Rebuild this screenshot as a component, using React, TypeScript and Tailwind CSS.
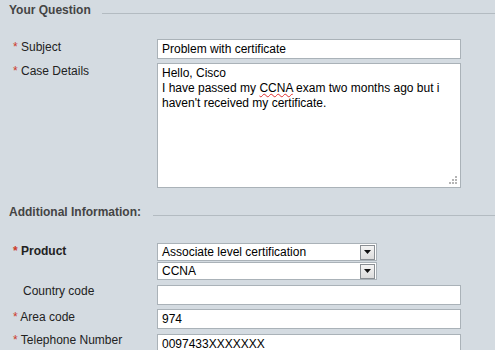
import React from "react";

const font = { fontFamily: '"Liberation Sans", Arial, sans-serif' };

function Star() {
  return <span className="text-[#cc3a2a]">*</span>;
}

function Label({ star, bold, children, extra }: { star?: boolean; bold?: boolean; children: React.ReactNode; extra?: string }) {
  return (
    <div className={`w-[148px] shrink-0 text-[12px] leading-[14px] text-[#222] ${star ? "pl-[4px]" : "pl-[14px]"} ${bold ? "font-bold" : ""} ${extra ?? ""}`}>
      {star && (
        <>
          <Star />{" "}
        </>
      )}
      {children}
    </div>
  );
}

function TextBox({ value }: { value: string }) {
  return (
    <div className="w-[304px] h-[20px] bg-white border border-[#aab2b8] px-[4px] text-[12px] leading-[18px] text-black">
      {value}
    </div>
  );
}

function Select({ value }: { value: string }) {
  return (
    <div className="w-[220px] h-[18px] bg-white border border-[#aab2b8] flex items-center text-[12px] text-black">
      <div className="flex-1 pl-[4px] leading-[16px]">{value}</div>
      <div className="w-[15px] h-[15px] mr-[1px] border border-[#8a8f94] bg-gradient-to-b from-[#f4f4f4] to-[#dcdcdc] flex items-center justify-center">
        <svg width="7" height="4" viewBox="0 0 7 4">
          <path d="M0 0 H7 L3.5 4 Z" fill="#111" />
        </svg>
      </div>
    </div>
  );
}

function Header({ title, gap }: { title: string; gap: string }) {
  return (
    <div className="flex items-start">
      <div className="text-[12px] leading-[14px] font-bold text-[#444] whitespace-nowrap">{title}</div>
      <div className={`flex-1 h-px bg-[#b3bbc1] mt-[10px] ${gap}`} />
    </div>
  );
}

export default function App() {
  return (
    <div className="w-[495px] h-[350px] overflow-hidden bg-[#d4dbe1] pl-[9px]" style={font}>
      <div className="pt-[3px]">
        <Header title="Your Question" gap="ml-[11px]" />
      </div>

      <div className="flex mt-[22px]">
        <Label star extra="mt-[1px]">Subject</Label>
        <TextBox value="Problem with certificate" />
      </div>

      <div className="flex mt-[4px]">
        <Label star extra="mt-[1px]">Case Details</Label>
        <div className="relative w-[304px] h-[125px] bg-white border border-[#aab2b8] px-[4px] pt-[2px] text-[12px] leading-[15px] text-black">
          <div>Hello, Cisco</div>
          <div>
            I have passed my{" "}
            <span className="underline decoration-wavy decoration-[#e03030] decoration-1 underline-offset-[1px]">CCNA</span>{" "}
            exam two months ago but i
          </div>
          <div>haven't received my certificate.</div>
          <svg className="absolute right-[2px] bottom-[2px]" width="9" height="9" viewBox="0 0 9 9">
            <rect x="6" y="0" width="2" height="2" fill="#b5b5b5" />
            <rect x="3" y="3" width="2" height="2" fill="#b5b5b5" />
            <rect x="6" y="3" width="2" height="2" fill="#b5b5b5" />
            <rect x="0" y="6" width="2" height="2" fill="#b5b5b5" />
            <rect x="3" y="6" width="2" height="2" fill="#b5b5b5" />
            <rect x="6" y="6" width="2" height="2" fill="#b5b5b5" />
          </svg>
        </div>
      </div>

      <div className="mt-[17px]">
        <Header title="Additional Information:" gap="ml-[12px]" />
      </div>

      <div className="flex mt-[24px]">
        <Label star bold extra="mt-[1px]">Product</Label>
        <div className="flex flex-col gap-[1px]">
          <Select value="Associate level certification" />
          <Select value="CCNA" />
        </div>
      </div>

      <div className="flex mt-[5px]">
        <Label extra="-mt-[1px]">Country code</Label>
        <TextBox value="" />
      </div>

      <div className="flex mt-[4px]">
        <Label star extra="mt-[1px]">Area code</Label>
        <TextBox value="974" />
      </div>

      <div className="flex mt-[5px]">
        <Label star extra="-mt-[1px]">Telephone Number</Label>
        <TextBox value="0097433XXXXXXX" />
      </div>
    </div>
  );
}
